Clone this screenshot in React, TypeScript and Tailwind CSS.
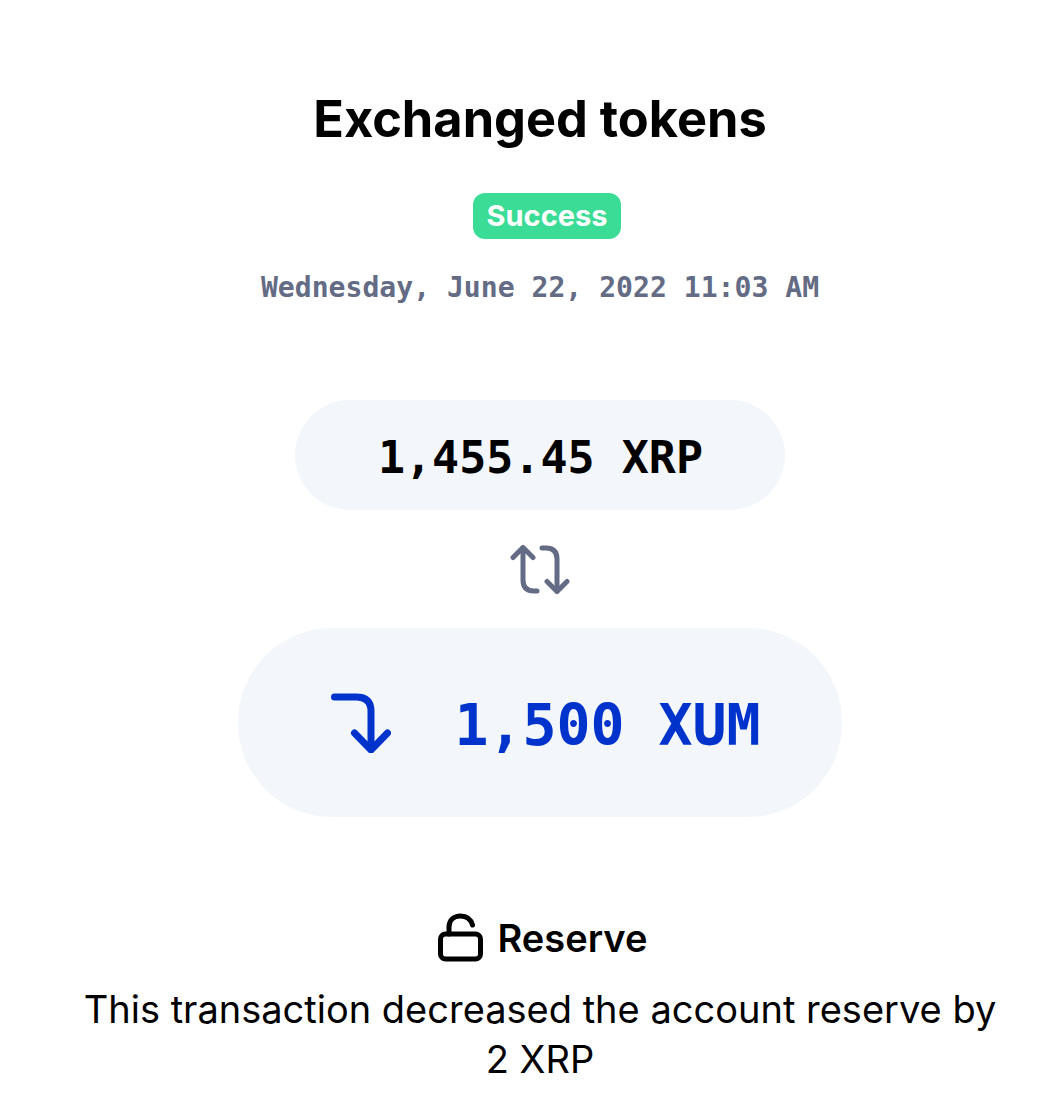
const sans = "font-['Inter','Liberation_Sans',sans-serif]";
const mono = "font-['DejaVu_Sans_Mono','Liberation_Mono',monospace]";

function SwapIcon() {
  return (
    <svg width="60" height="50" viewBox="0 0 60 50" fill="none" stroke="#636b85" strokeWidth="5" strokeLinecap="round" strokeLinejoin="round">
      <path d="M3 12.5 L13 2.5 L23 12.5" />
      <path d="M13 3 V35 Q13 46 24 46 H27" />
      <path d="M32 3 H36 Q47 3 47 14 V46" />
      <path d="M37 36.5 L47 46.5 L57 36.5" />
    </svg>
  );
}

function TurnIcon() {
  return (
    <svg width="60" height="60" viewBox="0 0 60 60" fill="none" stroke="#0033cc" strokeWidth="7" strokeLinecap="round" strokeLinejoin="round">
      <path d="M3.5 4 H25 Q40 4 40 18 V56" />
      <path d="M23.5 40 L40 57 L56.5 40" />
    </svg>
  );
}

function LockIcon() {
  return (
    <svg width="45" height="49" viewBox="0 0 45 49" fill="none" stroke="#000" strokeWidth="5" strokeLinecap="round" strokeLinejoin="round">
      <rect x="2.5" y="21" width="40" height="25" rx="5" />
      <path d="M11 21 V14 C11 7 16 3 22.5 3 C29 3 33 7 34.5 12" />
    </svg>
  );
}

export default function App() {
  return (
    <div className={`h-[1101px] w-[1054px] overflow-hidden bg-white ${sans}`}>
      <div className="flex w-[1080px] flex-col items-center pt-[85px]">
        <h1 className="text-[50.5px] leading-[68px] font-bold text-black">Exchanged tokens</h1>
        <div className="mt-[40px] ml-[14px] flex h-[46px] w-[148px] items-center justify-center rounded-[12px] bg-[#3bdc96] text-[29px] font-bold text-white">
          Success
        </div>
        <div className={`mt-[31px] text-[28.1px] leading-[36px] font-bold text-[#636b85] ${mono}`}>
          Wednesday, June 22, 2022 11:03 AM
        </div>
        <div className={`mt-[94px] flex h-[110px] w-[490px] items-center justify-center rounded-[55px] bg-[#f3f6fb] pt-[6px] pl-[1px] text-[45px] font-bold text-black ${mono}`}>
          1,455.45 XRP
        </div>
        <div className="mt-[35px] h-[50px]">
          <SwapIcon />
        </div>
        <div className={`mt-[33px] flex h-[189px] w-[604px] items-center justify-center gap-[63px] rounded-[94px] bg-[#f3f6fb] pl-[12px] text-[56.5px] font-bold text-[#0033cc] ${mono}`}>
          <TurnIcon />
          <span className="pt-[8px]">1,500 XUM</span>
        </div>
        <div className="mt-[96px] ml-[5px] flex items-center gap-[15px]">
          <LockIcon />
          <span className="text-[38px] leading-[46px] font-semibold text-black">Reserve</span>
        </div>
        <p className="mt-[22px] w-[940px] text-center text-[38px] leading-[50px] text-black">
          This transaction decreased the account reserve by 2 XRP
        </p>
      </div>
    </div>
  );
}
